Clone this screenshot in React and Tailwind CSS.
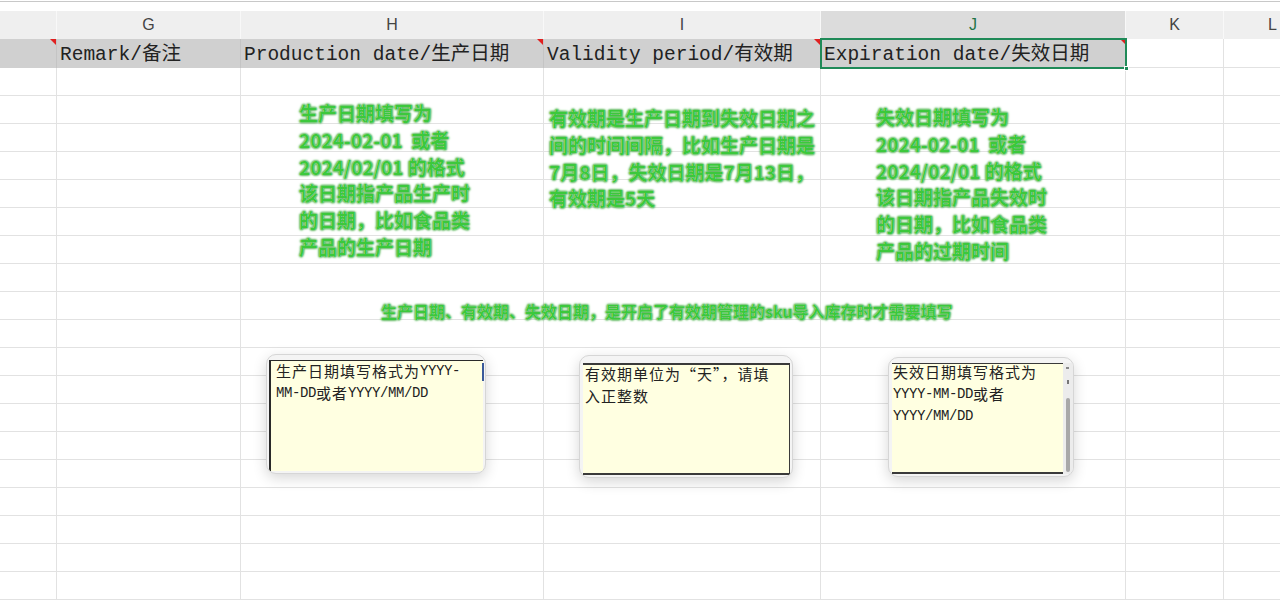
import React from 'react'

const cols = [
  { key: 'F', w: 'w-[57px]' },
  { key: 'G', w: 'w-[184px]' },
  { key: 'H', w: 'w-[303px]' },
  { key: 'I', w: 'w-[277px]' },
  { key: 'J', w: 'w-[305px]' },
  { key: 'K', w: 'w-[98px]' },
  { key: 'L', w: 'w-[98px]' },
]

const glow =
  'font-bold text-[#3cc83c] [text-shadow:0_0_1px_#ffffff,0_0_2px_#2f9f2f,0_0_2px_#2f9f2f,0_0_3px_#46b846]'

function RedMark() {
  return (
    <div className="absolute top-0 right-0 w-0 h-0 border-l-[6px] border-l-transparent border-t-[6px] border-t-[#e02020]" />
  )
}

function Latin({ children }) {
  return <span className="font-['Liberation_Mono',monospace] text-[14px] tracking-[-0.4px]">{children}</span>
}

function GreenNote({ className, lines, size = 'text-[19px] leading-[26.8px]' }) {
  return (
    <div className={`absolute font-['Noto_Sans_CJK_SC',sans-serif] whitespace-pre ${size} ${glow} ${className}`}>
      {lines.map((l, i) => (
        <div key={i}>{l}</div>
      ))}
    </div>
  )
}

// one line of comment text, fixed height so mixed fonts keep the rhythm
function NoteLine({ children }) {
  return <div className="h-[22px] flex items-center whitespace-nowrap">{children}</div>
}

const noteText = 'text-[15px] tracking-[1px] text-[#222] font-["Noto_Sans_CJK_SC",sans-serif]'
const frame =
  'absolute rounded-[10px] bg-[#f4f4f4] border border-[#d6d6d6] shadow-[0_4px_14px_rgba(0,0,0,0.16)] overflow-hidden'

export default function App() {
  const rows = Array.from({ length: 19 })

  return (
    <div className="relative w-[1280px] h-[608px] overflow-hidden bg-white font-['Noto_Sans_CJK_SC',sans-serif]">
      {/* top edge */}
      <div className="h-[10px] mt-px border-t border-[#c8c8c8]" />

      {/* column letters */}
      <div className="flex h-[28px] bg-[#efefef] text-[16px] text-[#444] font-['Liberation_Sans','Noto_Sans',sans-serif]">
        {cols.map((c) => (
          <div
            key={c.key}
            className={`${c.w} shrink-0 flex items-center justify-center border-r border-[#f8f8f8] ${
              c.key === 'J' ? 'bg-[#dcdcdc] text-[#217346]' : ''
            }`}
          >
            {c.key === 'F' ? '' : c.key}
          </div>
        ))}
      </div>

      {/* header row */}
      <div className="flex h-[29px] text-[19.5px] text-[#222] font-['Liberation_Mono','Noto_Sans_CJK_SC',monospace]">
        <div className="relative w-[57px] shrink-0 bg-[#d0d0d0] border-r border-[#c4c4c4]">
          <RedMark />
        </div>
        <div className="w-[184px] shrink-0 bg-[#d0d0d0] border-r border-[#c4c4c4] flex items-center pl-[3px] pt-[4px] whitespace-nowrap">
          Remark/备注
        </div>
        <div className="relative w-[303px] shrink-0 bg-[#d0d0d0] border-r border-[#c4c4c4] flex items-center pl-[3px] pt-[4px] whitespace-nowrap">
          Production date/生产日期
          <RedMark />
        </div>
        <div className="relative w-[277px] shrink-0 bg-[#d0d0d0] border-r border-[#c4c4c4] flex items-center pl-[3px] pt-[4px] whitespace-nowrap">
          Validity period/有效期
          <RedMark />
        </div>
        <div className="relative w-[305px] shrink-0 bg-[#d0d0d0] flex items-center pl-[3px] pt-[4px] whitespace-nowrap">
          Expiration date/失效日期
          <RedMark />
          {/* active cell */}
          <div className="absolute -left-px -top-px -right-px -bottom-px border-2 border-[#1f8a58]" />
          <div className="absolute -right-[3px] -bottom-[3px] w-[5px] h-[5px] bg-[#1f8a58] border border-white" />
        </div>
        <div className="w-[98px] shrink-0 border-r border-[#e2e2e2] border-b" />
        <div className="w-[98px] shrink-0 border-b border-[#e2e2e2]" />
      </div>

      {/* body grid */}
      {rows.map((_, r) => (
        <div key={r} className="flex h-[28px]">
          {cols.map((c) => (
            <div key={c.key} className={`${c.w} shrink-0 border-r border-b border-[#e2e2e2]`} />
          ))}
        </div>
      ))}

      {/* floating notes */}
      <GreenNote
        className="left-[299px] top-[100px]"
        lines={['生产日期填写为', '2024-02-01  或者', '2024/02/01 的格式', '该日期指产品生产时', '的日期，比如食品类', '产品的生产日期']}
      />
      <GreenNote
        className="left-[549px] top-[105px]"
        lines={['有效期是生产日期到失效日期之', '间的时间间隔，比如生产日期是', '7月8日，失效日期是7月13日，', '有效期是5天']}
      />
      <GreenNote
        className="left-[876px] top-[104px]"
        lines={['失效日期填写为', '2024-02-01  或者', '2024/02/01 的格式', '该日期指产品失效时', '的日期，比如食品类', '产品的过期时间']}
      />
      <GreenNote
        className="left-[381px] top-[300px]"
        size="text-[16px] leading-[22px]"
        lines={['生产日期、有效期、失效日期，是开启了有效期管理的sku导入库存时才需要填写']}
      />

      {/* comment: production date */}
      <div className={`${frame} left-[266px] top-[354px] w-[220px] h-[120px] p-[6px_2px_2px_2px] flex`}>
        <div className={`flex-1 bg-[#ffffe1] border-l-2 border-t border-[#2a2a2a] pl-[5px] -mt-px ${noteText}`}>
          <div className="-mt-px">
            <NoteLine>
              生产日期填写格式为<Latin>YYYY-</Latin>
            </NoteLine>
            <NoteLine>
              <Latin>MM-DD</Latin>或者<Latin>YYYY/MM/DD</Latin>
            </NoteLine>
          </div>
        </div>
        <div className="absolute right-[1px] top-[8px] w-[2px] h-[18px] bg-[#3a5a9a]" />
      </div>

      {/* comment: validity */}
      <div className={`${frame} left-[579px] top-[355px] w-[214px] h-[123px] p-[7px_2px_2px_3px] flex`}>
        <div className={`flex-1 bg-[#ffffe1] border-t-2 border-b-2 border-r border-[#3a3a3a] pl-[2px] ${noteText}`}>
          <div className="-mt-[2px]">
            <NoteLine>有效期单位为“天”，请填</NoteLine>
            <NoteLine>入正整数</NoteLine>
          </div>
        </div>
      </div>

      {/* comment: expiration date */}
      <div className={`${frame} left-[888px] top-[357px] w-[186px] h-[120px] p-[5px_0_2px_3px] flex`}>
        <div className={`w-[171px] bg-[#ffffe1] border-t border-b-2 border-[#3a3a3a] pl-[1px] ${noteText}`}>
          <div className="-mt-[3px]">
            <NoteLine>失效日期填写格式为</NoteLine>
            <NoteLine>
              <Latin>YYYY-MM-DD</Latin>或者
            </NoteLine>
            <NoteLine>
              <Latin>YYYY/MM/DD</Latin>
            </NoteLine>
          </div>
        </div>
        {/* scrollbar */}
        <div className="relative w-[10px] bg-[#ececec]">
          <div className="absolute left-[3px] top-[4px] w-[3px] h-[2px] bg-[#888]" />
          <div className="absolute left-[4px] top-[17px] w-[2px] h-[4px] bg-[#777]" />
          <div className="absolute left-[3px] top-[35px] bottom-[2px] w-[4px] rounded-full bg-[#a8a8a8]" />
        </div>
      </div>
    </div>
  )
}
